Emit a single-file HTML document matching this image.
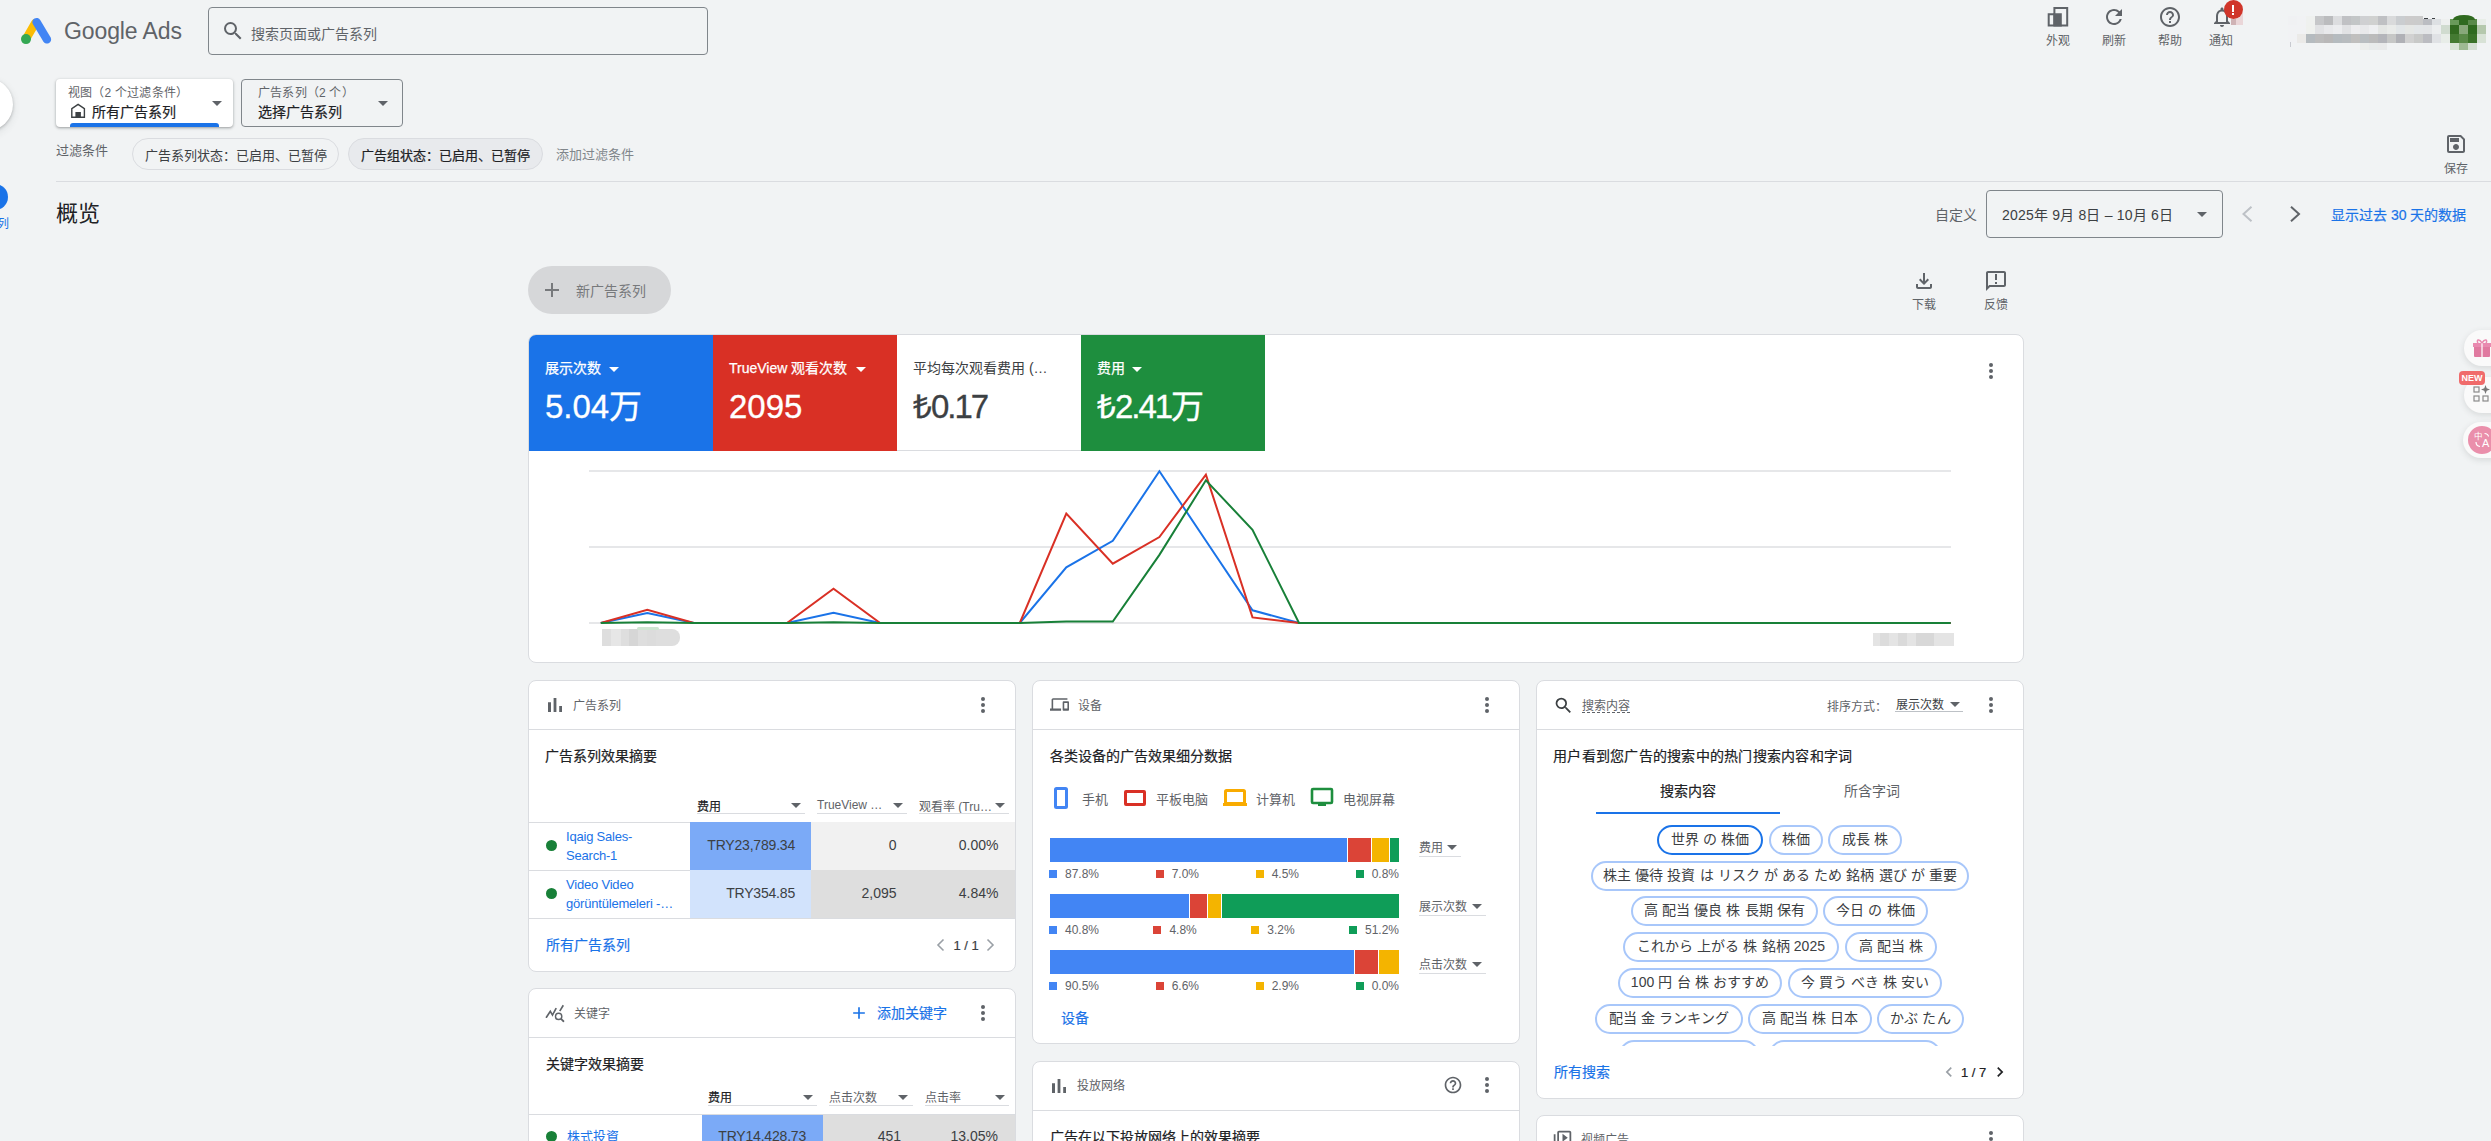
<!DOCTYPE html>
<html lang="zh-CN">
<head>
<meta charset="utf-8">
<style>
*{box-sizing:border-box;margin:0;padding:0}
html,body{width:2491px;height:1141px;overflow:hidden}
body{background:#f1f3f4;font-family:"Liberation Sans",sans-serif;color:#202124;position:relative}
.a{position:absolute;white-space:nowrap}
.card{position:absolute;background:#fff;border:1px solid #dadce0;border-radius:8px}
</style>
</head>
<body>
<svg class="a" style="left:21px;top:16px" width="31" height="29" viewBox="0 0 31 28"><path d="M5 22.5 L14.2 6.6" stroke="#fbbc04" stroke-width="8.4" stroke-linecap="round"/><path d="M15.6 5.6 L25.9 22.9" stroke="#4285f4" stroke-width="8.4" stroke-linecap="round"/><circle cx="5" cy="22.6" r="5" fill="#34a853"/></svg>
<div class="a" style="left:64px;top:17px;font-size:23px;line-height:29px;color:#5f6368;font-weight:400;letter-spacing:-0.1px">Google Ads</div>
<div class="a" style="left:208px;top:7px;width:500px;height:48px;background:transparent;border:1px solid #80868b;border-radius:4px"></div>
<svg class="a" style="left:221px;top:19px" width="24" height="24" viewBox="0 0 24 24"><path fill="#5f6368" d="M15.5 14h-.79l-.28-.27A6.471 6.471 0 0 0 16 9.5 6.5 6.5 0 1 0 9.5 16c1.61 0 3.09-.59 4.23-1.57l.27.28v.79l5 4.99L20.49 19l-4.99-5zm-6 0C7.01 14 5 11.99 5 9.5S7.01 5 9.5 5 14 7.01 14 9.5 11.99 14 9.5 14z"/></svg>
<div class="a" style="left:251px;top:24px;font-size:14px;line-height:20px;color:#5f6368;font-weight:400;">搜索页面或广告系列</div>
<svg class="a" style="left:2046px;top:5px" width="24" height="24" viewBox="0 0 24 24"><path fill="none" stroke="#5f6368" stroke-width="2" d="M8.4 20.5V2.9H21.2V20.5H2.7V9.25H8.4"/><rect x="7.4" y="8.25" width="8.4" height="13.25" fill="#5f6368"/></svg>
<div class="a" style="left:2046px;top:32px;font-size:12px;line-height:18px;color:#5f6368;font-weight:400;">外观</div>
<div class="a" style="left:2102px;top:32px;font-size:12px;line-height:18px;color:#5f6368;font-weight:400;">刷新</div>
<div class="a" style="left:2158px;top:32px;font-size:12px;line-height:18px;color:#5f6368;font-weight:400;">帮助</div>
<div class="a" style="left:2209px;top:32px;font-size:12px;line-height:18px;color:#5f6368;font-weight:400;">通知</div>
<svg class="a" style="left:2102px;top:5px" width="24" height="24" viewBox="0 0 24 24"><path fill="#5f6368" d="M17.65 6.35A7.958 7.958 0 0 0 12 4c-4.42 0-7.99 3.58-7.99 8s3.57 8 7.99 8c3.73 0 6.84-2.55 7.73-6h-2.08A5.99 5.99 0 0 1 12 18c-3.31 0-6-2.69-6-6s2.69-6 6-6c1.66 0 3.14.69 4.22 1.78L13 11h7V4l-2.35 2.35z"/></svg>
<svg class="a" style="left:2158px;top:5px" width="24" height="24" viewBox="0 0 24 24"><path fill="#5f6368" d="M11 18h2v-2h-2v2zm1-16C6.48 2 2 6.48 2 12s4.48 10 10 10 10-4.48 10-10S17.52 2 12 2zm0 18c-4.41 0-8-3.59-8-8s3.59-8 8-8 8 3.59 8 8-3.59 8-8 8zm0-14c-2.21 0-4 1.79-4 4h2c0-1.1.9-2 2-2s2 .9 2 2c0 2-3 1.75-3 5h2c0-2.25 3-2.5 3-5 0-2.21-1.79-4-4-4z"/></svg>
<svg class="a" style="left:2210px;top:5px" width="24" height="24" viewBox="0 0 24 24"><path fill="#5f6368" d="M12 22c1.1 0 2-.9 2-2h-4c0 1.1.89 2 2 2zm6-6v-5c0-3.07-1.64-5.64-4.5-6.32V4c0-.83-.67-1.5-1.5-1.5s-1.5.67-1.5 1.5v.68C7.63 5.36 6 7.92 6 11v5l-2 2v1h16v-1l-2-2zm-2 1H8v-6c0-2.48 1.51-4.5 4-4.5s4 2.02 4 4.5v6z"/></svg>
<div class="a" style="left:2231px;top:13px;width:12px;height:12px;background:#ead6d8;"></div>
<div class="a" style="left:2231px;top:19px;width:5px;height:6px;background:#cfb3b5;"></div>
<div class="a" style="left:2223.5px;top:-0.5px;width:19.5px;height:19.5px;background:#d0352a;border-radius:50%"></div>
<div class="a" style="left:2232px;top:5px;width:2.2px;height:6.5px;background:#fff;"></div>
<div class="a" style="left:2232px;top:12.5px;width:2.2px;height:2px;background:#fff;"></div>
<div class="a" style="left:2288px;top:16px;width:9px;height:9px;background:#f0f1f3"></div><div class="a" style="left:2297px;top:16px;width:9px;height:9px;background:#f1f2f4"></div><div class="a" style="left:2306px;top:16px;width:9px;height:9px;background:#eff1ef"></div><div class="a" style="left:2315px;top:16px;width:9px;height:9px;background:#c6c7c9"></div><div class="a" style="left:2324px;top:16px;width:9px;height:9px;background:#bbbcbe"></div><div class="a" style="left:2333px;top:16px;width:9px;height:9px;background:#dcdddf"></div><div class="a" style="left:2342px;top:16px;width:9px;height:9px;background:#c0c1c4"></div><div class="a" style="left:2351px;top:16px;width:9px;height:9px;background:#c3c6c7"></div><div class="a" style="left:2360px;top:16px;width:9px;height:9px;background:#cfd0d2"></div><div class="a" style="left:2369px;top:16px;width:9px;height:9px;background:#d0d1d0"></div><div class="a" style="left:2378px;top:16px;width:9px;height:9px;background:#bfc0c3"></div><div class="a" style="left:2387px;top:16px;width:9px;height:9px;background:#d9dadb"></div><div class="a" style="left:2396px;top:16px;width:9px;height:9px;background:#cacdd0"></div><div class="a" style="left:2405px;top:16px;width:9px;height:9px;background:#cccbcb"></div><div class="a" style="left:2414px;top:16px;width:9px;height:9px;background:#cbcbcb"></div><div class="a" style="left:2423px;top:19px;width:9px;height:6px;background:#bbbdc2"></div><div class="a" style="left:2432px;top:19px;width:9px;height:6px;background:#dde0e3"></div><div class="a" style="left:2441px;top:19px;width:9px;height:6px;background:#eef0ef"></div><div class="a" style="left:2450px;top:19px;width:9px;height:6px;background:#6a9a5a"></div><div class="a" style="left:2459px;top:19px;width:9px;height:6px;background:#2f6a1f"></div><div class="a" style="left:2468px;top:19px;width:9px;height:6px;background:#5a8a4a"></div><div class="a" style="left:2477px;top:19px;width:9px;height:6px;background:#e8ede8"></div><div class="a" style="left:2288px;top:25px;width:9px;height:9px;background:#f1f2f4"></div><div class="a" style="left:2297px;top:25px;width:9px;height:9px;background:#f1f2f4"></div><div class="a" style="left:2306px;top:25px;width:9px;height:9px;background:#eff1ee"></div><div class="a" style="left:2315px;top:25px;width:9px;height:9px;background:#e1e2e4"></div><div class="a" style="left:2324px;top:25px;width:9px;height:9px;background:#e8e9eb"></div><div class="a" style="left:2333px;top:25px;width:9px;height:9px;background:#ecedef"></div><div class="a" style="left:2342px;top:25px;width:9px;height:9px;background:#e1e2e4"></div><div class="a" style="left:2351px;top:25px;width:9px;height:9px;background:#ededef"></div><div class="a" style="left:2360px;top:25px;width:9px;height:9px;background:#e8e9eb"></div><div class="a" style="left:2369px;top:25px;width:9px;height:9px;background:#eeeff1"></div><div class="a" style="left:2378px;top:25px;width:9px;height:9px;background:#e4e6e4"></div><div class="a" style="left:2387px;top:25px;width:9px;height:9px;background:#e9ebe9"></div><div class="a" style="left:2396px;top:25px;width:9px;height:9px;background:#e2e6e8"></div><div class="a" style="left:2405px;top:25px;width:9px;height:9px;background:#e5e7e5"></div><div class="a" style="left:2414px;top:25px;width:9px;height:9px;background:#e3e6e8"></div><div class="a" style="left:2423px;top:25px;width:9px;height:9px;background:#e3e5e7"></div><div class="a" style="left:2432px;top:25px;width:9px;height:9px;background:#eceeef"></div><div class="a" style="left:2441px;top:25px;width:9px;height:9px;background:#d0dbcf"></div><div class="a" style="left:2450px;top:25px;width:9px;height:9px;background:#326a20"></div><div class="a" style="left:2459px;top:25px;width:9px;height:9px;background:#88a87a"></div><div class="a" style="left:2468px;top:25px;width:9px;height:9px;background:#2f6a1f"></div><div class="a" style="left:2477px;top:25px;width:9px;height:9px;background:#b5c8ad"></div><div class="a" style="left:2288px;top:34px;width:9px;height:9px;background:#f1f2f4"></div><div class="a" style="left:2297px;top:34px;width:9px;height:9px;background:#ebeae8"></div><div class="a" style="left:2306px;top:34px;width:9px;height:9px;background:#b5bbbf"></div><div class="a" style="left:2315px;top:34px;width:9px;height:9px;background:#bcbcbc"></div><div class="a" style="left:2324px;top:34px;width:9px;height:9px;background:#b9b8b8"></div><div class="a" style="left:2333px;top:34px;width:9px;height:9px;background:#b5bbbf"></div><div class="a" style="left:2342px;top:34px;width:9px;height:9px;background:#b8bcbf"></div><div class="a" style="left:2351px;top:34px;width:9px;height:9px;background:#c0bfbe"></div><div class="a" style="left:2360px;top:34px;width:9px;height:9px;background:#b9bec1"></div><div class="a" style="left:2369px;top:34px;width:9px;height:9px;background:#bbbbbb"></div><div class="a" style="left:2378px;top:34px;width:9px;height:9px;background:#b4b5ba"></div><div class="a" style="left:2387px;top:34px;width:9px;height:9px;background:#c6c7c6"></div><div class="a" style="left:2396px;top:34px;width:9px;height:9px;background:#b0b1b6"></div><div class="a" style="left:2405px;top:34px;width:9px;height:9px;background:#d1d1d1"></div><div class="a" style="left:2414px;top:34px;width:9px;height:9px;background:#c8c9c8"></div><div class="a" style="left:2423px;top:34px;width:9px;height:9px;background:#bbbcc1"></div><div class="a" style="left:2432px;top:34px;width:9px;height:9px;background:#e0e2e5"></div><div class="a" style="left:2441px;top:34px;width:9px;height:9px;background:#e8ede8"></div><div class="a" style="left:2450px;top:34px;width:9px;height:9px;background:#447a32"></div><div class="a" style="left:2459px;top:34px;width:9px;height:9px;background:#5a8a48"></div><div class="a" style="left:2468px;top:34px;width:9px;height:9px;background:#3a7228"></div><div class="a" style="left:2477px;top:34px;width:9px;height:9px;background:#d8e2d6"></div>
<div class="a" style="left:2453px;top:15px;width:22px;height:4.5px;border-radius:50% 50% 0 0 / 100% 100% 0 0;background:#2f6a1f"></div>
<div class="a" style="left:2360px;top:43px;width:9px;height:7px;background:#eceeec"></div>
<div class="a" style="left:2369px;top:43px;width:9px;height:7px;background:#e8ebeb"></div>
<div class="a" style="left:2378px;top:43px;width:9px;height:7px;background:#e9eaea"></div>
<div class="a" style="left:2450px;top:43px;width:9px;height:7px;background:#d7e3d5"></div>
<div class="a" style="left:2459px;top:43px;width:9px;height:7px;background:#9fba94"></div>
<div class="a" style="left:2468px;top:43px;width:9px;height:7px;background:#d4dfd2"></div>
<div class="a" style="left:2290px;top:42px;width:1px;height:5px;background:#c8cad0;"></div>
<div class="a" style="left:2424px;top:17.8px;width:3.5px;height:1.4px;background:#3c4043;"></div>
<div class="a" style="left:2431.5px;top:17.8px;width:3.5px;height:1.4px;background:#3c4043;"></div>
<div class="a" style="left:-40px;top:78px;width:53px;height:53px;background:#fff;border-radius:50%;box-shadow:0 1px 3px rgba(60,64,67,.3),0 3px 8px rgba(60,64,67,.12)"></div>
<div class="a" style="left:-18px;top:184px;width:26px;height:26px;background:#1a73e8;border-radius:50%"></div>
<div class="a" style="left:-3px;top:215px;font-size:12px;line-height:18px;color:#1a73e8;font-weight:400;">列</div>
<div class="a" style="left:56px;top:79px;width:177px;height:48px;background:#fff;border-radius:4px;box-shadow:0 1px 2px rgba(60,64,67,.3),0 1px 3px 1px rgba(60,64,67,.15)"></div>
<div class="a" style="left:68px;top:84px;font-size:12px;line-height:18px;color:#5f6368;font-weight:400;letter-spacing:0.2px">视图（2 个过滤条件）</div>
<svg class="a" style="left:70px;top:103px" width="16" height="16" viewBox="0 0 16 16"><path fill="none" stroke="#3c4043" stroke-width="1.4" d="M1.8 14.3V5.6L8.1 1.3l6.3 4.3v8.7z"/><rect x="5.4" y="9" width="5.5" height="5.5" fill="#3c4043"/></svg>
<div class="a" style="left:92px;top:102px;font-size:14px;line-height:20px;color:#202124;font-weight:400;;-webkit-text-stroke:0.2px #202124">所有广告系列</div>
<div class="a" style="left:212px;top:101px;width:0;height:0;border-left:5.0px solid transparent;border-right:5.0px solid transparent;border-top:5px solid #5f6368"></div>
<div class="a" style="left:70px;top:123px;width:149px;height:4px;background:#1a73e8;border-radius:3px 3px 0 0"></div>
<div class="a" style="left:241px;top:79px;width:162px;height:48px;background:transparent;border:1px solid #80868b;border-radius:4px"></div>
<div class="a" style="left:258px;top:84px;font-size:12px;line-height:18px;color:#5f6368;font-weight:400;letter-spacing:0.2px">广告系列（2 个）</div>
<div class="a" style="left:258px;top:102px;font-size:14px;line-height:20px;color:#202124;font-weight:400;;-webkit-text-stroke:0.2px #202124">选择广告系列</div>
<div class="a" style="left:378px;top:101px;width:0;height:0;border-left:5.0px solid transparent;border-right:5.0px solid transparent;border-top:5px solid #5f6368"></div>
<div class="a" style="left:56px;top:141px;font-size:13px;line-height:19px;color:#5f6368;font-weight:400;">过滤条件</div>
<div class="a" style="left:132px;top:138px;width:207px;height:32px;background:transparent;border:1px solid #dadce0;border-radius:16px"></div>
<div class="a" style="left:145px;top:146px;font-size:13px;line-height:19px;color:#3c4043;font-weight:400;">广告系列状态：已启用、已暂停</div>
<div class="a" style="left:348px;top:138px;width:195px;height:32px;background:#e8eaed;border:1px solid #dadce0;border-radius:16px"></div>
<div class="a" style="left:361px;top:146px;font-size:13px;line-height:19px;color:#202124;font-weight:400;;-webkit-text-stroke:0.2px #202124">广告组状态：已启用、已暂停</div>
<div class="a" style="left:556px;top:145px;font-size:13px;line-height:19px;color:#80868b;font-weight:400;">添加过滤条件</div>
<svg class="a" style="left:2444px;top:132px" width="24" height="24" viewBox="0 0 24 24"><path fill="#5f6368" d="M17 3H5a2 2 0 0 0-2 2v14a2 2 0 0 0 2 2h14c1.1 0 2-.9 2-2V7l-4-4zm2 16H5V5h11.17L19 7.83V19zm-7-7c-1.66 0-3 1.34-3 3s1.34 3 3 3 3-1.34 3-3-1.34-3-3-3zM6 6h9v4H6z"/></svg>
<div class="a" style="left:2444px;top:160px;font-size:12px;line-height:18px;color:#5f6368;font-weight:400;">保存</div>
<div class="a" style="left:56px;top:181px;width:2435px;height:1px;background:#dadce0;"></div>
<div class="a" style="left:56px;top:200px;font-size:22px;line-height:28px;color:#202124;font-weight:400;">概览</div>
<div class="a" style="left:1935px;top:205px;font-size:14px;line-height:20px;color:#5f6368;font-weight:400;">自定义</div>
<div class="a" style="left:1986px;top:190px;width:237px;height:48px;background:transparent;border:1px solid #80868b;border-radius:4px"></div>
<div class="a" style="left:2002px;top:205px;font-size:14px;line-height:20px;color:#3c4043;font-weight:400;letter-spacing:0.2px">2025年 9月 8日 – 10月 6日</div>
<div class="a" style="left:2197px;top:212px;width:0;height:0;border-left:5.0px solid transparent;border-right:5.0px solid transparent;border-top:5px solid #5f6368"></div>
<svg class="a" style="left:2235px;top:202px" width="24" height="24" viewBox="0 0 24 24"><path fill="none" stroke="#bdc1c6" stroke-width="2" d="M16.5 4.8 8.5 12l8 7.2"/></svg>
<svg class="a" style="left:2283px;top:202px" width="24" height="24" viewBox="0 0 24 24"><path fill="none" stroke="#5f6368" stroke-width="2" d="M8 4.8 16 12l-8 7.2"/></svg>
<div class="a" style="left:2331px;top:205px;font-size:14px;line-height:20px;color:#1a73e8;font-weight:400;;-webkit-text-stroke:0.2px #1a73e8">显示过去 30 天的数据</div>
<div class="a" style="left:528px;top:266px;width:143px;height:48px;background:#d6d7d9;border-radius:24px"></div>
<svg class="a" style="left:540px;top:278px" width="24" height="24" viewBox="0 0 24 24"><path fill="#77797c" d="M19 13h-6v6h-2v-6H5v-2h6V5h2v6h6v2z"/></svg>
<div class="a" style="left:576px;top:281px;font-size:14px;line-height:20px;color:#77797c;font-weight:400;">新广告系列</div>
<svg class="a" style="left:1912px;top:269px" width="24" height="24" viewBox="0 0 24 24"><path fill="#5f6368" d="M18 15v3H6v-3H4v3c0 1.1.9 2 2 2h12c1.1 0 2-.9 2-2v-3h-2zm-1-4-1.41-1.41L13 12.17V4h-2v8.17L8.41 9.59 7 11l5 5 5-5z"/></svg>
<div class="a" style="left:1912px;top:296px;font-size:12px;line-height:18px;color:#5f6368;font-weight:400;">下载</div>
<svg class="a" style="left:1984px;top:269px" width="24" height="24" viewBox="0 0 24 24"><path fill="#5f6368" d="M20 2H4c-1.1 0-1.99.9-1.99 2L2 22l4-4h14c1.1 0 2-.9 2-2V4c0-1.1-.9-2-2-2zm0 14H5.17L4 17.17V4h16v12zM11 5h2v6h-2zm0 8h2v2h-2z"/></svg>
<div class="a" style="left:1984px;top:296px;font-size:12px;line-height:18px;color:#5f6368;font-weight:400;">反馈</div>
<div class="a" style="left:2464px;top:330px;width:60px;height:36px;background:#fafafa;border-radius:18px;box-shadow:0 2px 6px rgba(60,64,67,.15)"></div>
<svg class="a" style="left:2473px;top:338px" width="20" height="20" viewBox="0 0 20 20"><rect x="1" y="7" width="16" height="12" rx="1" fill="#e07aa0"/><rect x="0" y="5" width="18" height="4" fill="#e98ab0"/><rect x="8" y="5" width="2" height="14" fill="#fff" opacity=".6"/><path d="M9 5 C6 0 3 2 5 5 M9 5 C12 0 15 2 13 5" stroke="#e98ab0" stroke-width="1.5" fill="none"/></svg>
<div class="a" style="left:2464px;top:377px;width:60px;height:36px;background:#fafafa;border-radius:18px;box-shadow:0 2px 6px rgba(60,64,67,.15)"></div>
<svg class="a" style="left:2473px;top:385px" width="22" height="20" viewBox="0 0 22 20"><g fill="none" stroke="#8a8a8a" stroke-width="1.2"><rect x="1" y="2" width="5" height="5"/><rect x="1" y="11" width="5" height="5"/><rect x="10" y="11" width="5" height="5"/></g><path d="M12.5 0 L13.7 3.3 L17 4.5 L13.7 5.7 L12.5 9 L11.3 5.7 L8 4.5 L11.3 3.3Z" fill="#777"/></svg>
<div class="a" style="left:2459px;top:371px;width:26px;height:14px;background:#f06b6b;border-radius:4px"></div>
<div class="a" style="left:2459px;top:371px;width:26px;line-height:14px;font-size:9px;font-weight:bold;color:#fff;text-align:center">NEW</div>
<div class="a" style="left:2463px;top:422px;width:60px;height:36px;background:#fafafa;border-radius:18px;box-shadow:0 2px 6px rgba(60,64,67,.15)"></div>
<div class="a" style="left:2468px;top:426px;width:28px;height:28px;background:#ea8fab;border-radius:50%"></div>
<div class="a" style="left:2473.5px;top:431px;font-size:8.5px;line-height:10px;color:#fff">中</div>
<div class="a" style="left:2482px;top:438px;font-size:11px;line-height:11px;color:#fff">A</div>
<svg class="a" style="left:2472px;top:430px" width="20" height="20" viewBox="0 0 20 20"><path d="M12.5 3.5 Q16 3.5 16.5 6.5" stroke="#fff" stroke-width="1.2" fill="none"/><path d="M4 12 Q4 16 8 16.5" stroke="#fff" stroke-width="1.2" fill="none"/></svg>
<div class="card" style="left:528px;top:334px;width:1496px;height:329px;overflow:hidden">
<div class="a" style="left:0px;top:0;width:184px;height:116px;background:#1a73e8;"></div>
<div class="a" style="left:16px;top:23px;font-size:14px;line-height:20px;color:#fff;-webkit-text-stroke:0.25px #fff">展示次数</div>
<div class="a" style="left:16px;top:52px;font-size:33px;line-height:39px;color:#fff;letter-spacing:0;-webkit-text-stroke:0.3px #fff">5.04万</div>
<div class="a" style="left:184px;top:0;width:184px;height:116px;background:#d93025;"></div>
<div class="a" style="left:200px;top:23px;font-size:14px;line-height:20px;color:#fff;-webkit-text-stroke:0.25px #fff">TrueView 观看次数</div>
<div class="a" style="left:200px;top:52px;font-size:33px;line-height:39px;color:#fff;letter-spacing:0;-webkit-text-stroke:0.3px #fff">2095</div>
<div class="a" style="left:368px;top:0;width:184px;height:116px;background:#fff;border-bottom:1px solid #dadce0;"></div>
<div class="a" style="left:384px;top:23px;font-size:14px;line-height:20px;color:#3c4043;-webkit-text-stroke:0 #3c4043">平均每次观看费用 (…</div>
<div class="a" style="left:384px;top:52px;font-size:33px;line-height:39px;color:#3c4043;letter-spacing:-2px;-webkit-text-stroke:0.3px #3c4043"><span style="letter-spacing:-1px">₺</span>0.17</div>
<div class="a" style="left:552px;top:0;width:184px;height:116px;background:#1e8e3e;"></div>
<div class="a" style="left:568px;top:23px;font-size:14px;line-height:20px;color:#fff;-webkit-text-stroke:0.25px #fff">费用</div>
<div class="a" style="left:568px;top:52px;font-size:33px;line-height:39px;color:#fff;letter-spacing:-2px;-webkit-text-stroke:0.3px #fff"><span style="letter-spacing:-1px">₺</span>2.41万</div>
</div>
<div class="a" style="left:609px;top:367px;width:0;height:0;border-left:5.0px solid transparent;border-right:5.0px solid transparent;border-top:5px solid #fff"></div>
<div class="a" style="left:856px;top:367px;width:0;height:0;border-left:5.0px solid transparent;border-right:5.0px solid transparent;border-top:5px solid #fff"></div>
<div class="a" style="left:1132px;top:367px;width:0;height:0;border-left:5.0px solid transparent;border-right:5.0px solid transparent;border-top:5px solid #fff"></div>
<div class="a" style="left:1989px;top:363px;width:4px;height:4px;border-radius:50%;background:#5f6368"></div>
<div class="a" style="left:1989px;top:369px;width:4px;height:4px;border-radius:50%;background:#5f6368"></div>
<div class="a" style="left:1989px;top:375px;width:4px;height:4px;border-radius:50%;background:#5f6368"></div>
<div class="a" style="left:589px;top:470px;width:1362px;height:1.6px;background:#e6e7e9;"></div>
<div class="a" style="left:589px;top:546px;width:1362px;height:1.6px;background:#e6e7e9;"></div>
<div class="a" style="left:589px;top:622px;width:1362px;height:1.6px;background:#e6e7e9;"></div>
<svg class="a" style="left:528px;top:334px" width="1496" height="329" viewBox="0 0 1496 329"><polyline points="72.8,289.0 119.3,279.1 165.9,289.0 212.4,289.0 259.0,289.0 305.5,278.8 352.1,289.0 398.6,289.0 445.2,289.0 491.8,289.0 538.3,233.4 584.8,206.8 631.4,137.3 677.9,206.7 724.5,276.3 771.0,289.0 817.6,289.0 864.1,289.0 910.7,289.0 957.2,289.0 1003.8,289.0 1050.3,289.0 1096.9,289.0 1143.4,289.0 1190.0,289.0 1236.5,289.0 1283.1,289.0 1329.6,289.0 1376.2,289.0 1422.7,289.0" fill="none" stroke="#1a73e8" stroke-width="2" stroke-linejoin="miter"/><polyline points="72.8,289.0 119.3,275.7 165.9,289.0 212.4,289.0 259.0,289.0 305.5,254.7 352.1,289.0 398.6,289.0 445.2,289.0 491.8,289.0 538.3,179.6 584.8,229.7 631.4,203.0 677.9,140.6 724.5,283.4 771.0,289.0 817.6,289.0 864.1,289.0 910.7,289.0 957.2,289.0 1003.8,289.0 1050.3,289.0 1096.9,289.0 1143.4,289.0 1190.0,289.0 1236.5,289.0 1283.1,289.0 1329.6,289.0 1376.2,289.0 1422.7,289.0" fill="none" stroke="#d93025" stroke-width="2" stroke-linejoin="miter"/><polyline points="72.8,289.0 119.3,288.3 165.9,289.0 212.4,289.0 259.0,289.0 305.5,288.2 352.1,289.0 398.6,289.0 445.2,289.0 491.8,289.0 538.3,287.6 584.8,287.6 631.4,220.9 677.9,146.3 724.5,195.8 771.0,289.0 817.6,289.0 864.1,289.0 910.7,289.0 957.2,289.0 1003.8,289.0 1050.3,289.0 1096.9,289.0 1143.4,289.0 1190.0,289.0 1236.5,289.0 1283.1,289.0 1329.6,289.0 1376.2,289.0 1422.7,289.0" fill="none" stroke="#188038" stroke-width="2" stroke-linejoin="miter"/></svg>
<div class="a" style="left:602px;top:629px;width:78px;height:17px;background:#dedede;border-radius:0 8px 8px 0"></div>
<div class="a" style="left:611px;top:629px;width:10px;height:17px;background:#e6e6e6;"></div>
<div class="a" style="left:629px;top:629px;width:9px;height:17px;background:#d6d6d6;"></div>
<div class="a" style="left:647px;top:629px;width:9px;height:17px;background:#dcdcdc;"></div>
<div class="a" style="left:637px;top:627px;width:22px;height:3px;background:#cfe5d2;border-radius:3px"></div>
<div class="a" style="left:1873px;top:633px;width:81px;height:13px;background:#e4e4e4;"></div>
<div class="a" style="left:1880px;top:633px;width:9px;height:13px;background:#dcdcdc;"></div>
<div class="a" style="left:1898px;top:633px;width:9px;height:13px;background:#dadada;"></div>
<div class="a" style="left:1916px;top:633px;width:18px;height:13px;background:#d8d8d8;"></div>
<div class="card" style="left:528px;top:680px;width:488px;height:292px"></div>
<div class="a" style="left:529px;top:729px;width:486px;height:1px;background:#dadce0;"></div>
<svg class="a" style="left:543px;top:693px" width="24" height="24" viewBox="0 0 24 24"><path fill="#5f6368" d="M5 9.2h3V19H5zM10.6 5h2.8v14h-2.8zm5.6 8H19v6h-2.8z"/></svg>
<div class="a" style="left:573px;top:697px;font-size:12px;line-height:18px;color:#5f6368;font-weight:400;">广告系列</div>
<div class="a" style="left:981px;top:697px;width:4px;height:4px;border-radius:50%;background:#5f6368"></div>
<div class="a" style="left:981px;top:703px;width:4px;height:4px;border-radius:50%;background:#5f6368"></div>
<div class="a" style="left:981px;top:709px;width:4px;height:4px;border-radius:50%;background:#5f6368"></div>
<div class="a" style="left:545px;top:746px;font-size:14px;line-height:20px;color:#202124;font-weight:400;;-webkit-text-stroke:0.2px #202124">广告系列效果摘要</div>
<div class="a" style="left:697px;top:798px;font-size:12px;line-height:18px;color:#202124;font-weight:400;;-webkit-text-stroke:0.2px #202124">费用</div>
<div class="a" style="left:697px;top:813px;width:108px;height:1px;background:#dadce0;"></div>
<div class="a" style="left:791px;top:803px;width:0;height:0;border-left:5.0px solid transparent;border-right:5.0px solid transparent;border-top:5px solid #5f6368"></div>
<div class="a" style="left:817px;top:796px;font-size:12px;line-height:18px;color:#5f6368;font-weight:400;">TrueView …</div>
<div class="a" style="left:817px;top:813px;width:90px;height:1px;background:#dadce0;"></div>
<div class="a" style="left:893px;top:803px;width:0;height:0;border-left:5.0px solid transparent;border-right:5.0px solid transparent;border-top:5px solid #5f6368"></div>
<div class="a" style="left:919px;top:798px;font-size:12px;line-height:18px;color:#5f6368;font-weight:400;">观看率 (Tru…</div>
<div class="a" style="left:919px;top:813px;width:90px;height:1px;background:#dadce0;"></div>
<div class="a" style="left:995px;top:803px;width:0;height:0;border-left:5.0px solid transparent;border-right:5.0px solid transparent;border-top:5px solid #5f6368"></div>
<div class="a" style="left:529px;top:822px;width:486px;height:1px;background:#dadce0;"></div>
<div class="a" style="left:690px;top:822px;width:121px;height:48px;background:#7baaf7;"></div>
<div class="a" style="left:811px;top:822px;width:204px;height:48px;background:#f1f1f1;"></div>
<div class="a" style="left:690px;top:870px;width:121px;height:48px;background:#d2e3fc;"></div>
<div class="a" style="left:811px;top:870px;width:204px;height:48px;background:#dedede;"></div>
<div class="a" style="left:529px;top:870px;width:161px;height:1px;background:#dadce0;"></div>
<div class="a" style="left:529px;top:918px;width:486px;height:1px;background:#dadce0;"></div>
<div class="a" style="left:546px;top:840px;width:11px;height:11px;background:#188038;border-radius:50%"></div>
<div class="a" style="left:546px;top:888px;width:11px;height:11px;background:#188038;border-radius:50%"></div>
<div class="a" style="left:566px;top:826.5px;font-size:13px;line-height:19px;color:#1a73e8;font-weight:400;letter-spacing:-0.2px">Iqaig Sales-</div>
<div class="a" style="left:566px;top:846px;font-size:13px;line-height:19px;color:#1a73e8;font-weight:400;letter-spacing:-0.2px">Search-1</div>
<div class="a" style="left:566px;top:874.7px;font-size:13px;line-height:19px;color:#1a73e8;font-weight:400;letter-spacing:-0.2px">Video Video</div>
<div class="a" style="left:566px;top:893.8px;font-size:13px;line-height:19px;color:#1a73e8;font-weight:400;letter-spacing:-0.2px">görüntülemeleri -…</div>
<div class="a" style="left:495px;width:300px;text-align:right;top:835px;font-size:14px;line-height:20px;color:#3c4043;font-weight:400;letter-spacing:-0.2px">TRY23,789.34</div>
<div class="a" style="left:596.5px;width:300px;text-align:right;top:834.7px;font-size:14px;line-height:20px;color:#3c4043;font-weight:400;">0</div>
<div class="a" style="left:698.5px;width:300px;text-align:right;top:834.7px;font-size:14px;line-height:20px;color:#3c4043;font-weight:400;">0.00%</div>
<div class="a" style="left:495px;width:300px;text-align:right;top:882.6px;font-size:14px;line-height:20px;color:#3c4043;font-weight:400;letter-spacing:-0.2px">TRY354.85</div>
<div class="a" style="left:596.5px;width:300px;text-align:right;top:882.6px;font-size:14px;line-height:20px;color:#3c4043;font-weight:400;">2,095</div>
<div class="a" style="left:698.5px;width:300px;text-align:right;top:882.6px;font-size:14px;line-height:20px;color:#3c4043;font-weight:400;">4.84%</div>
<div class="a" style="left:546px;top:935px;font-size:14px;line-height:20px;color:#1a73e8;font-weight:400;;-webkit-text-stroke:0.2px #1a73e8">所有广告系列</div>
<svg class="a" style="left:928px;top:933px" width="24" height="24" viewBox="0 0 24 24"><path fill="none" stroke="#9aa0a6" stroke-width="1.6" d="M15.5 6.5 10 12l5.5 5.5"/></svg>
<div class="a" style="left:953.5px;top:936.1px;font-size:13px;line-height:19px;color:#3c4043;font-weight:400;;-webkit-text-stroke:0.2px #3c4043">1 / 1</div>
<svg class="a" style="left:979px;top:933px" width="24" height="24" viewBox="0 0 24 24"><path fill="none" stroke="#9aa0a6" stroke-width="1.6" d="M8.5 6.5 14 12l-5.5 5.5"/></svg>
<div class="card" style="left:528px;top:988px;width:488px;height:220px"></div>
<div class="a" style="left:529px;top:1037px;width:486px;height:1px;background:#dadce0;"></div>
<svg class="a" style="left:540px;top:995px" width="80" height="35" viewBox="0 0 2488 1088"><g fill="none" stroke-linecap="round"><polyline points="200,690 320,505 390,625 495,425" stroke="#5f6368" stroke-width="52"/><line x1="615" y1="500" x2="725" y2="320" stroke="#5f6368" stroke-width="52" stroke-linecap="butt"/><circle cx="580" cy="665" r="100" stroke="#fff" stroke-width="120"/><circle cx="580" cy="665" r="98" stroke="#5f6368" stroke-width="44"/><line x1="670" y1="760" x2="730" y2="815" stroke="#5f6368" stroke-width="56"/></g></svg>
<div class="a" style="left:574px;top:1005px;font-size:12px;line-height:18px;color:#5f6368;font-weight:400;">关键字</div>
<svg class="a" style="left:849px;top:1003px" width="20" height="20" viewBox="0 0 24 24"><path fill="#1a73e8" d="M19 13h-6v6h-2v-6H5v-2h6V5h2v6h6v2z"/></svg>
<div class="a" style="left:877px;top:1003px;font-size:14px;line-height:20px;color:#1a73e8;font-weight:400;;-webkit-text-stroke:0.2px #1a73e8">添加关键字</div>
<div class="a" style="left:981px;top:1005px;width:4px;height:4px;border-radius:50%;background:#5f6368"></div>
<div class="a" style="left:981px;top:1011px;width:4px;height:4px;border-radius:50%;background:#5f6368"></div>
<div class="a" style="left:981px;top:1017px;width:4px;height:4px;border-radius:50%;background:#5f6368"></div>
<div class="a" style="left:546px;top:1054px;font-size:14px;line-height:20px;color:#202124;font-weight:400;;-webkit-text-stroke:0.2px #202124">关键字效果摘要</div>
<div class="a" style="left:708px;top:1089px;font-size:12px;line-height:18px;color:#202124;font-weight:400;;-webkit-text-stroke:0.2px #202124">费用</div>
<div class="a" style="left:708px;top:1105px;width:109px;height:1px;background:#dadce0;"></div>
<div class="a" style="left:803px;top:1095px;width:0;height:0;border-left:5.0px solid transparent;border-right:5.0px solid transparent;border-top:5px solid #5f6368"></div>
<div class="a" style="left:829px;top:1089px;font-size:12px;line-height:18px;color:#5f6368;font-weight:400;">点击次数</div>
<div class="a" style="left:829px;top:1105px;width:84px;height:1px;background:#dadce0;"></div>
<div class="a" style="left:898px;top:1095px;width:0;height:0;border-left:5.0px solid transparent;border-right:5.0px solid transparent;border-top:5px solid #5f6368"></div>
<div class="a" style="left:925px;top:1089px;font-size:12px;line-height:18px;color:#5f6368;font-weight:400;">点击率</div>
<div class="a" style="left:925px;top:1105px;width:84px;height:1px;background:#dadce0;"></div>
<div class="a" style="left:995px;top:1095px;width:0;height:0;border-left:5.0px solid transparent;border-right:5.0px solid transparent;border-top:5px solid #5f6368"></div>
<div class="a" style="left:529px;top:1114px;width:486px;height:1px;background:#dadce0;"></div>
<div class="a" style="left:702px;top:1115px;width:121px;height:48px;background:#7baaf7;"></div>
<div class="a" style="left:823px;top:1115px;width:192px;height:48px;background:#dedede;"></div>
<div class="a" style="left:546px;top:1131px;width:11px;height:11px;background:#188038;border-radius:50%"></div>
<div class="a" style="left:567px;top:1127px;font-size:13px;line-height:19px;color:#1a73e8;font-weight:400;">株式投資</div>
<div class="a" style="left:506px;width:300px;text-align:right;top:1126px;font-size:14px;line-height:20px;color:#3c4043;font-weight:400;letter-spacing:-0.2px">TRY14,428.73</div>
<div class="a" style="left:601px;width:300px;text-align:right;top:1126px;font-size:14px;line-height:20px;color:#3c4043;font-weight:400;">451</div>
<div class="a" style="left:698px;width:300px;text-align:right;top:1126px;font-size:14px;line-height:20px;color:#3c4043;font-weight:400;">13.05%</div>
<div class="card" style="left:1032px;top:680px;width:488px;height:364px"></div>
<div class="a" style="left:1033px;top:729px;width:486px;height:1px;background:#dadce0;"></div>
<svg class="a" style="left:1049.5px;top:695px" width="19" height="19" viewBox="0 0 24 24"><path fill="#5f6368" d="M4 6h18V4H4c-1.1 0-2 .9-2 2v11H0v3h14v-3H4V6zm19 2h-6c-.55 0-1 .45-1 1v10c0 .55.45 1 1 1h6c.55 0 1-.45 1-1V9c0-.55-.45-1-1-1zm-1 9h-4v-7h4v7z"/></svg>
<div class="a" style="left:1078px;top:697px;font-size:12px;line-height:18px;color:#5f6368;font-weight:400;">设备</div>
<div class="a" style="left:1485px;top:697px;width:4px;height:4px;border-radius:50%;background:#5f6368"></div>
<div class="a" style="left:1485px;top:703px;width:4px;height:4px;border-radius:50%;background:#5f6368"></div>
<div class="a" style="left:1485px;top:709px;width:4px;height:4px;border-radius:50%;background:#5f6368"></div>
<div class="a" style="left:1050px;top:746px;font-size:14px;line-height:20px;color:#202124;font-weight:400;;-webkit-text-stroke:0.2px #202124">各类设备的广告效果细分数据</div>
<div class="a" style="left:1054px;top:787px;width:14px;height:22px;background:transparent;border:3px solid #4285f4;border-radius:2.5px"></div>
<div class="a" style="left:1082px;top:790px;font-size:13px;line-height:19px;color:#5f6368;font-weight:400;">手机</div>
<div class="a" style="left:1124px;top:790px;width:22px;height:16px;background:transparent;border:3px solid #d93025;border-radius:2px"></div>
<div class="a" style="left:1156px;top:790px;font-size:13px;line-height:19px;color:#5f6368;font-weight:400;">平板电脑</div>
<svg class="a" style="left:1222px;top:788px" width="26" height="20" viewBox="0 0 26 20"><rect x="3.5" y="2.5" width="19" height="13" rx="1" fill="none" stroke="#f9ab00" stroke-width="3"/><rect x="1" y="15" width="24" height="3" fill="#f9ab00"/></svg>
<div class="a" style="left:1256px;top:790px;font-size:13px;line-height:19px;color:#5f6368;font-weight:400;">计算机</div>
<svg class="a" style="left:1309px;top:786px" width="26" height="22" viewBox="0 0 26 22"><rect x="3" y="3" width="20" height="14" rx="1" fill="none" stroke="#1e8e3e" stroke-width="2.6"/><rect x="9" y="17" width="8" height="3" fill="#1e8e3e"/></svg>
<div class="a" style="left:1343px;top:790px;font-size:13px;line-height:19px;color:#5f6368;font-weight:400;">电视屏幕</div>
<div class="a" style="left:1050px;top:838px;width:297px;height:24px;background:#4285f4;"></div>
<div class="a" style="left:1348px;top:838px;width:23px;height:24px;background:#db4437;"></div>
<div class="a" style="left:1372px;top:838px;width:17px;height:24px;background:#f4b400;"></div>
<div class="a" style="left:1390px;top:838px;width:9px;height:24px;background:#0f9d58;"></div>
<div class="a" style="left:1049px;top:867px;width:350px;height:14px;display:flex;justify-content:space-between"><div style="display:flex;align-items:center;font-size:12px;line-height:14px;color:#5f6368"><span style="display:inline-block;width:8px;height:8px;background:#4285f4;margin-right:8px"></span>87.8%</div><div style="display:flex;align-items:center;font-size:12px;line-height:14px;color:#5f6368"><span style="display:inline-block;width:8px;height:8px;background:#db4437;margin-right:8px"></span>7.0%</div><div style="display:flex;align-items:center;font-size:12px;line-height:14px;color:#5f6368"><span style="display:inline-block;width:8px;height:8px;background:#f4b400;margin-right:8px"></span>4.5%</div><div style="display:flex;align-items:center;font-size:12px;line-height:14px;color:#5f6368"><span style="display:inline-block;width:8px;height:8px;background:#0f9d58;margin-right:8px"></span>0.8%</div></div>
<div class="a" style="left:1419px;top:839px;font-size:12px;line-height:18px;color:#5f6368;font-weight:400;">费用</div>
<div class="a" style="left:1447px;top:845px;width:0;height:0;border-left:5.0px solid transparent;border-right:5.0px solid transparent;border-top:5px solid #5f6368"></div>
<div class="a" style="left:1419px;top:856px;width:42px;height:1px;background:#dadce0;"></div>
<div class="a" style="left:1050px;top:894px;width:139px;height:24px;background:#4285f4;"></div>
<div class="a" style="left:1190px;top:894px;width:17px;height:24px;background:#db4437;"></div>
<div class="a" style="left:1208px;top:894px;width:13px;height:24px;background:#f4b400;"></div>
<div class="a" style="left:1222px;top:894px;width:177px;height:24px;background:#0f9d58;"></div>
<div class="a" style="left:1049px;top:923px;width:350px;height:14px;display:flex;justify-content:space-between"><div style="display:flex;align-items:center;font-size:12px;line-height:14px;color:#5f6368"><span style="display:inline-block;width:8px;height:8px;background:#4285f4;margin-right:8px"></span>40.8%</div><div style="display:flex;align-items:center;font-size:12px;line-height:14px;color:#5f6368"><span style="display:inline-block;width:8px;height:8px;background:#db4437;margin-right:8px"></span>4.8%</div><div style="display:flex;align-items:center;font-size:12px;line-height:14px;color:#5f6368"><span style="display:inline-block;width:8px;height:8px;background:#f4b400;margin-right:8px"></span>3.2%</div><div style="display:flex;align-items:center;font-size:12px;line-height:14px;color:#5f6368"><span style="display:inline-block;width:8px;height:8px;background:#0f9d58;margin-right:8px"></span>51.2%</div></div>
<div class="a" style="left:1419px;top:898px;font-size:12px;line-height:18px;color:#5f6368;font-weight:400;">展示次数</div>
<div class="a" style="left:1472px;top:904px;width:0;height:0;border-left:5.0px solid transparent;border-right:5.0px solid transparent;border-top:5px solid #5f6368"></div>
<div class="a" style="left:1419px;top:915px;width:67px;height:1px;background:#dadce0;"></div>
<div class="a" style="left:1050px;top:950px;width:304px;height:24px;background:#4285f4;"></div>
<div class="a" style="left:1355px;top:950px;width:23px;height:24px;background:#db4437;"></div>
<div class="a" style="left:1379px;top:950px;width:20px;height:24px;background:#f4b400;"></div>
<div class="a" style="left:1049px;top:979px;width:350px;height:14px;display:flex;justify-content:space-between"><div style="display:flex;align-items:center;font-size:12px;line-height:14px;color:#5f6368"><span style="display:inline-block;width:8px;height:8px;background:#4285f4;margin-right:8px"></span>90.5%</div><div style="display:flex;align-items:center;font-size:12px;line-height:14px;color:#5f6368"><span style="display:inline-block;width:8px;height:8px;background:#db4437;margin-right:8px"></span>6.6%</div><div style="display:flex;align-items:center;font-size:12px;line-height:14px;color:#5f6368"><span style="display:inline-block;width:8px;height:8px;background:#f4b400;margin-right:8px"></span>2.9%</div><div style="display:flex;align-items:center;font-size:12px;line-height:14px;color:#5f6368"><span style="display:inline-block;width:8px;height:8px;background:#0f9d58;margin-right:8px"></span>0.0%</div></div>
<div class="a" style="left:1419px;top:956px;font-size:12px;line-height:18px;color:#5f6368;font-weight:400;">点击次数</div>
<div class="a" style="left:1472px;top:962px;width:0;height:0;border-left:5.0px solid transparent;border-right:5.0px solid transparent;border-top:5px solid #5f6368"></div>
<div class="a" style="left:1419px;top:973px;width:67px;height:1px;background:#dadce0;"></div>
<div class="a" style="left:1061px;top:1008px;font-size:14px;line-height:20px;color:#1a73e8;font-weight:400;;-webkit-text-stroke:0.2px #1a73e8">设备</div>
<div class="card" style="left:1032px;top:1061px;width:488px;height:200px"></div>
<div class="a" style="left:1033px;top:1110px;width:486px;height:1px;background:#dadce0;"></div>
<svg class="a" style="left:1047px;top:1074px" width="24" height="24" viewBox="0 0 24 24"><path fill="#5f6368" d="M5 9.2h3V19H5zM10.6 5h2.8v14h-2.8zm5.6 8H19v6h-2.8z"/></svg>
<div class="a" style="left:1077px;top:1077px;font-size:12px;line-height:18px;color:#5f6368;font-weight:400;">投放网络</div>
<svg class="a" style="left:1443px;top:1075px" width="20" height="20" viewBox="0 0 24 24"><path fill="#5f6368" d="M11 18h2v-2h-2v2zm1-16C6.48 2 2 6.48 2 12s4.48 10 10 10 10-4.48 10-10S17.52 2 12 2zm0 18c-4.41 0-8-3.59-8-8s3.59-8 8-8 8 3.59 8 8-3.59 8-8 8zm0-14c-2.21 0-4 1.79-4 4h2c0-1.1.9-2 2-2s2 .9 2 2c0 2-3 1.75-3 5h2c0-2.25 3-2.5 3-5 0-2.21-1.79-4-4-4z"/></svg>
<div class="a" style="left:1485px;top:1077px;width:4px;height:4px;border-radius:50%;background:#5f6368"></div>
<div class="a" style="left:1485px;top:1083px;width:4px;height:4px;border-radius:50%;background:#5f6368"></div>
<div class="a" style="left:1485px;top:1089px;width:4px;height:4px;border-radius:50%;background:#5f6368"></div>
<div class="a" style="left:1050px;top:1127px;font-size:14px;line-height:20px;color:#202124;font-weight:400;;-webkit-text-stroke:0.2px #202124">广告在以下投放网络上的效果摘要</div>
<div class="card" style="left:1536px;top:680px;width:488px;height:419px"></div>
<div class="a" style="left:1537px;top:729px;width:486px;height:1px;background:#dadce0;"></div>
<svg class="a" style="left:1552.5px;top:694.5px" width="21" height="21" viewBox="0 0 24 24"><path fill="#3c4043" d="M15.5 14h-.79l-.28-.27A6.471 6.471 0 0 0 16 9.5 6.5 6.5 0 1 0 9.5 16c1.61 0 3.09-.59 4.23-1.57l.27.28v.79l5 4.99L20.49 19l-4.99-5zm-6 0C7.01 14 5 11.99 5 9.5S7.01 5 9.5 5 14 7.01 14 9.5 11.99 14 9.5 14z"/></svg>
<div class="a" style="left:1582px;top:697px;font-size:12px;line-height:18px;color:#5f6368;font-weight:400;">搜索内容</div>
<div class="a" style="left:1582px;top:712px;width:48px;height:1px;background:transparent;border-top:1px dashed #5f6368"></div>
<div class="a" style="left:1827px;top:698px;font-size:12px;line-height:18px;color:#5f6368;font-weight:400;">排序方式：</div>
<div class="a" style="left:1896px;top:696px;font-size:12px;line-height:18px;color:#3c4043;font-weight:400;">展示次数</div>
<div class="a" style="left:1950px;top:702px;width:0;height:0;border-left:5.0px solid transparent;border-right:5.0px solid transparent;border-top:5px solid #5f6368"></div>
<div class="a" style="left:1895px;top:711px;width:68px;height:1px;background:#bdc1c6;"></div>
<div class="a" style="left:1989px;top:697px;width:4px;height:4px;border-radius:50%;background:#5f6368"></div>
<div class="a" style="left:1989px;top:703px;width:4px;height:4px;border-radius:50%;background:#5f6368"></div>
<div class="a" style="left:1989px;top:709px;width:4px;height:4px;border-radius:50%;background:#5f6368"></div>
<div class="a" style="left:1553px;top:746px;font-size:14px;line-height:20px;color:#202124;font-weight:400;letter-spacing:0.25px;-webkit-text-stroke:0.2px #202124">用户看到您广告的搜索中的热门搜索内容和字词</div>
<div class="a" style="left:1660px;top:781px;font-size:14px;line-height:20px;color:#202124;font-weight:400;;-webkit-text-stroke:0.2px #202124">搜索内容</div>
<div class="a" style="left:1844px;top:781px;font-size:14px;line-height:20px;color:#5f6368;font-weight:400;">所含字词</div>
<div class="a" style="left:1596px;top:812px;width:184px;height:2px;background:#1a73e8;"></div>
<div class="a" style="left:1537px;top:820px;width:486px;height:226px;overflow:hidden">
<div class="a" style="left:120px;top:5px;width:106px;height:30px;border:2px solid #1a73e8;border-radius:15px;font-size:14px;line-height:25px;text-align:center;color:#3c4043;letter-spacing:0.1px">世界 の 株価</div>
<div class="a" style="left:232px;top:5px;width:54px;height:30px;border:2px solid #a8c7fa;border-radius:15px;font-size:14px;line-height:25px;text-align:center;color:#3c4043;letter-spacing:0.1px">株価</div>
<div class="a" style="left:291px;top:5px;width:74px;height:30px;border:2px solid #a8c7fa;border-radius:15px;font-size:14px;line-height:25px;text-align:center;color:#3c4043;letter-spacing:0.1px">成長 株</div>
<div class="a" style="left:54px;top:41px;width:378px;height:30px;border:2px solid #a8c7fa;border-radius:15px;font-size:14px;line-height:25px;text-align:center;color:#3c4043;letter-spacing:0.1px">株主 優待 投資 は リスク が ある ため 銘柄 選び が 重要</div>
<div class="a" style="left:94px;top:76px;width:187px;height:30px;border:2px solid #a8c7fa;border-radius:15px;font-size:14px;line-height:25px;text-align:center;color:#3c4043;letter-spacing:0.1px">高 配当 優良 株 長期 保有</div>
<div class="a" style="left:286px;top:76px;width:105px;height:30px;border:2px solid #a8c7fa;border-radius:15px;font-size:14px;line-height:25px;text-align:center;color:#3c4043;letter-spacing:0.1px">今日 の 株価</div>
<div class="a" style="left:86px;top:112px;width:216px;height:30px;border:2px solid #a8c7fa;border-radius:15px;font-size:14px;line-height:25px;text-align:center;color:#3c4043;letter-spacing:0.1px">これから 上がる 株 銘柄 2025</div>
<div class="a" style="left:308px;top:112px;width:92px;height:30px;border:2px solid #a8c7fa;border-radius:15px;font-size:14px;line-height:25px;text-align:center;color:#3c4043;letter-spacing:0.1px">高 配当 株</div>
<div class="a" style="left:81px;top:148px;width:164px;height:30px;border:2px solid #a8c7fa;border-radius:15px;font-size:14px;line-height:25px;text-align:center;color:#3c4043;letter-spacing:0.1px">100 円 台 株 おすすめ</div>
<div class="a" style="left:251px;top:148px;width:154px;height:30px;border:2px solid #a8c7fa;border-radius:15px;font-size:14px;line-height:25px;text-align:center;color:#3c4043;letter-spacing:0.1px">今 買う べき 株 安い</div>
<div class="a" style="left:58px;top:184px;width:148px;height:30px;border:2px solid #a8c7fa;border-radius:15px;font-size:14px;line-height:25px;text-align:center;color:#3c4043;letter-spacing:0.1px">配当 金 ランキング</div>
<div class="a" style="left:211px;top:184px;width:124px;height:30px;border:2px solid #a8c7fa;border-radius:15px;font-size:14px;line-height:25px;text-align:center;color:#3c4043;letter-spacing:0.1px">高 配当 株 日本</div>
<div class="a" style="left:340px;top:184px;width:87px;height:30px;border:2px solid #a8c7fa;border-radius:15px;font-size:14px;line-height:25px;text-align:center;color:#3c4043;letter-spacing:0.1px">かぶ たん</div>
<div class="a" style="left:82px;top:220px;width:140px;height:30px;border:2px solid #a8c7fa;border-radius:15px;font-size:14px;line-height:25px;text-align:center;color:#3c4043;letter-spacing:0.1px"></div>
<div class="a" style="left:232px;top:220px;width:172px;height:30px;border:2px solid #a8c7fa;border-radius:15px;font-size:14px;line-height:25px;text-align:center;color:#3c4043;letter-spacing:0.1px"></div>
</div>
<div class="a" style="left:1554px;top:1062px;font-size:14px;line-height:20px;color:#1a73e8;font-weight:400;;-webkit-text-stroke:0.2px #1a73e8">所有搜索</div>
<svg class="a" style="left:1939px;top:1062px" width="20" height="20" viewBox="0 0 24 24"><path fill="#9aa0a6" d="M15.41 7.41 14 6l-6 6 6 6 1.41-1.41L10.83 12z"/></svg>
<div class="a" style="left:1961px;top:1063px;font-size:13px;line-height:19px;color:#202124;font-weight:400;;-webkit-text-stroke:0.2px #202124">1 / 7</div>
<svg class="a" style="left:1990px;top:1062px" width="20" height="20" viewBox="0 0 24 24"><path fill="#202124" d="M10 6 8.59 7.41 13.17 12l-4.58 4.59L10 18l6-6z"/></svg>
<div class="card" style="left:1536px;top:1115px;width:488px;height:200px"></div>
<svg class="a" style="left:1552.25px;top:1129.25px" width="21" height="21" viewBox="0 0 24 24"><path fill="#5f6368" d="M4 6H2v14c0 1.1.9 2 2 2h14v-2H4V6zm16-4H8c-1.1 0-2 .9-2 2v12c0 1.1.9 2 2 2h12c1.1 0 2-.9 2-2V4c0-1.1-.9-2-2-2zm0 14H8V4h12v12zM12 5.5v9l6-4.5z"/></svg>
<div class="a" style="left:1581px;top:1131px;font-size:12px;line-height:18px;color:#5f6368;font-weight:400;">视频广告</div>
<div class="a" style="left:1989px;top:1131px;width:4px;height:4px;border-radius:50%;background:#5f6368"></div>
<div class="a" style="left:1989px;top:1137px;width:4px;height:4px;border-radius:50%;background:#5f6368"></div>
<div class="a" style="left:1989px;top:1143px;width:4px;height:4px;border-radius:50%;background:#5f6368"></div>
</body>
</html>
